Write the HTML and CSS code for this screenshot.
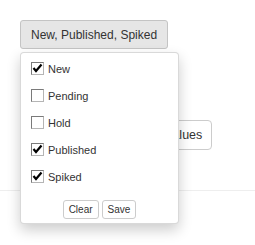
FILE: index.html
```html
<!DOCTYPE html>
<html lang="en">
<head>
  <meta charset="UTF-8" />
  <title>Status filter</title>
  <link rel="stylesheet" href="styles.css">
</head>
<body>
  <div class="page">
    <div class="filter">
      <button class="toggle">New, Published, Spiked</button>

      <!-- Status dropdown -->
      <div class="menu">
        <label class="option"><span class="box"><svg width="11" height="11" viewBox="0 0 11 11"><path d="M1.5 5 L4 8 L9.5 1.5" fill="none" stroke="#000" stroke-width="2.2"/></svg></span>New</label>
        <label class="option"><span class="box"></span>Pending</label>
        <label class="option"><span class="box"></span>Hold</label>
        <label class="option"><span class="box"><svg width="11" height="11" viewBox="0 0 11 11"><path d="M1.5 5 L4 8 L9.5 1.5" fill="none" stroke="#000" stroke-width="2.2"/></svg></span>Published</label>
        <label class="option"><span class="box"><svg width="11" height="11" viewBox="0 0 11 11"><path d="M1.5 5 L4 8 L9.5 1.5" fill="none" stroke="#000" stroke-width="2.2"/></svg></span>Spiked</label>
        <div class="menu-actions">
          <button class="small-btn">Clear</button>
          <button class="small-btn">Save</button>
        </div>
      </div>
    </div>

    <div class="row">
      <button class="plain-btn">Edit Values</button>
    </div>
  </div>
  <hr class="divider">
</body>
</html>
```

FILE: styles.css
```css
html, body {
  min-height: 245px;
}

body {
  margin: 0;
  font-family: 'Liberation Sans', Arial, sans-serif;
  color: #333;
  background: #fff;
}

.page {
  padding: 20px 20px 0;
}

.filter {
  position: relative;
  display: inline-block;
  z-index: 10;
}

.toggle {
  height: 29px;
  padding: 0 10px;
  font-family: inherit;
  font-size: 12px;
  color: #333;
  background-color: #e6e6e6;
  border: 1px solid #c4c4c4;
  border-radius: 3px;
  display: block;
}

.menu {
  position: absolute;
  top: 32px;
  left: 0;
  width: 157px;
  padding: 3px 0 4px;
  background: #fff;
  border: 1px solid rgba(0, 0, 0, 0.15);
  border-radius: 4px;
  box-shadow: 0 6px 14px rgba(0, 0, 0, 0.2);
}

.option {
  display: flex;
  align-items: center;
  height: 27px;
  padding-left: 10px;
  font-size: 11px;
  line-height: 13px;
  color: #333;
}

.option .box {
  margin-top: -2px;
}

.box {
  width: 11px;
  height: 11px;
  border: 1px solid #7a7a7a;
  border-right-color: #b5b5b5;
  border-bottom-color: #b5b5b5;
  background: #fff;
  margin-right: 4px;
  display: flex;
}

.menu-actions {
  display: flex;
  justify-content: center;
  gap: 3px;
  margin-top: 9px;
}

.small-btn {
  height: 19px;
  padding: 0 5px;
  font-family: inherit;
  font-size: 10px;
  color: #333;
  background: #fff;
  border: 1px solid #ccc;
  border-radius: 3px;
}

.row {
  margin-top: 71px;
  padding-left: 107px;
}

.plain-btn {
  height: 30px;
  padding: 0 9px 0 12px;
  font-family: inherit;
  font-size: 12.5px;
  color: #333;
  background: #fff;
  border: 1px solid #ccc;
  border-radius: 4px;
}

.divider {
  margin: 40px 0 0;
  border: 0;
  border-top: 1px solid #eee;
}
```
